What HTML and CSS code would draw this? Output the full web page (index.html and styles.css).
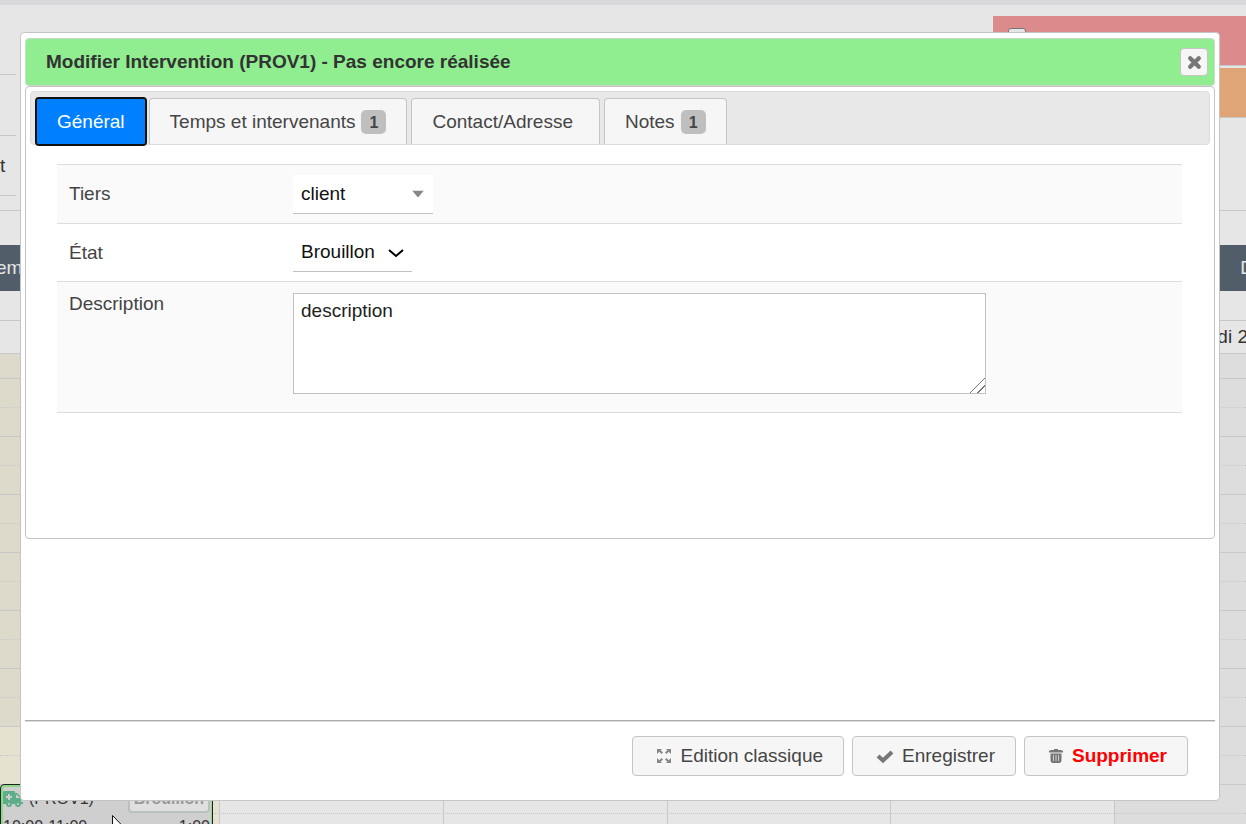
FILE: index.html
```html
<!DOCTYPE html>
<html lang="fr">
<head>
<meta charset="utf-8">
<title>Modifier Intervention</title>
<link rel="stylesheet" href="styles.css">
</head>
<body>
<main class="planner">
  <div class="topbar"></div>
  <div class="filters">
    <div class="filter-list">
      <div class="filter-row"></div>
      <div class="filter-row"></div>
      <div class="filter-row"><span>t</span></div>
    </div>
    <div class="legend">
      <div class="legend-item legend-red"><input type="checkbox" aria-label="Rouge"></div>
      <div class="legend-item legend-orange"></div>
    </div>
  </div>
  <div class="spacer"></div>
  <div class="band"><span>em</span><span>D</span></div>
  <div class="spacer-small"></div>
  <div class="day-head"><span>di 2</span></div>
  <div class="grid">
    <div class="columns">
      <div class="column today"></div><div class="column"></div><div class="column"></div><div class="column"></div><div class="column"></div><div class="column weekend"></div>
    </div>
    <div class="slots">
      <div class="slot first"></div>
      <div class="slot"></div><div class="slot half"></div>
      <div class="slot"></div><div class="slot half"></div>
      <div class="slot"></div><div class="slot half"></div>
      <div class="slot"></div><div class="slot half"></div>
      <div class="slot"></div><div class="slot half"></div>
      <div class="slot"></div><div class="slot half"></div>
      <div class="slot"></div><div class="slot half"></div>
      <div class="slot"></div><div class="slot half"></div>
    </div>
    <article class="event">
      <div class="event-line">
        <svg class="truck" viewBox="0 0 20 16" aria-hidden="true"><path fill="#5fae8a" fill-rule="evenodd" d="M1 0h10a1 1 0 0 1 1 1v1h2l4 4v5h2v2h-2a3 3 0 0 1-6 0H9a3 3 0 0 1-6 0H0V1a1 1 0 0 1 1-1zM5 3v2H3v2h2v2h2V7h2V5H7V3zm8 1v3h4l-3-3zM6 12a1 1 0 1 0 0 2 1 1 0 0 0 0-2zm9 0a1 1 0 1 0 0 2 1 1 0 0 0 0-2z"/></svg>
        <span>(PROV1)</span>
        <span class="status">Brouillon</span>
      </div>
      <div class="event-line times"><span>10:00-11:00</span><span>1:00</span></div>
      <svg class="pointer" viewBox="0 0 12 19" aria-hidden="true"><path d="M.5.5v15l3.500-3.300 2.500 5.500 2-1-2.400-5.200h5z" fill="#fff" stroke="#111"/></svg>
    </article>
  </div>
</main>

<div class="dialog" role="dialog" aria-labelledby="dialog-title">
  <header class="titlebar">
    <h1 id="dialog-title">Modifier Intervention (PROV1) - Pas encore réalisée</h1>
    <button class="close" type="button" aria-label="Fermer">
      <svg viewBox="0 0 14 14" aria-hidden="true"><path d="M3 3l8 8M11 3l-8 8" stroke="#777" stroke-width="4" stroke-linecap="round"/></svg>
    </button>
  </header>
  <section class="tabs">
    <div class="tab-list" role="tablist">
      <button class="tab active" role="tab" type="button" aria-selected="true">Général</button>
      <button class="tab" role="tab" type="button">Temps et intervenants<span class="badge">1</span></button>
      <button class="tab plain" role="tab" type="button">Contact/Adresse</button>
      <button class="tab" role="tab" type="button">Notes<span class="badge">1</span></button>
    </div>
    <form class="fields" id="fields">
      <div class="field shaded">
        <label for="tiers">Tiers</label>
        <div class="select-wrap wide">
          <select id="tiers"><option>client</option></select>
          <svg class="arrow-solid" viewBox="0 0 12 7" aria-hidden="true"><path d="M0 0h12L6 7z" fill="#888"/></svg>
        </div>
      </div>
      <div class="field">
        <label for="etat">État</label>
        <div class="select-wrap">
          <select id="etat"><option>Brouillon</option></select>
          <svg class="arrow-line" viewBox="0 0 16 10" aria-hidden="true"><path d="M1 2l7 6 7-6" fill="none" stroke="#000" stroke-width="2"/></svg>
        </div>
      </div>
      <div class="field shaded tall">
        <label for="description">Description</label>
        <textarea id="description">description</textarea>
      </div>
    </form>
  </section>
  <footer class="actions">
    <button class="action" type="button">
      <svg viewBox="0 0 16 16" aria-hidden="true"><path d="M1 1h5L4.700 2.300 7 4.600 5.600 6 3.300 3.700 1 6zM15 1h-5l1.300 1.300L9 4.600 10.400 6l2.300-2.300L15 6zM1 15h5l-1.300-1.300L7 11.400 5.600 10l-2.300 2.300L1 10zM15 15h-5l1.300-1.300L9 11.400l1.400-1.400 2.300 2.300L15 10z" fill="#888"/></svg>Edition classique
    </button>
    <button class="action" type="submit" form="fields">
      <svg class="check" viewBox="0 0 18 16" aria-hidden="true"><path d="M2 8l5 4.500L16 4" fill="none" stroke="#777" stroke-width="4"/></svg>Enregistrer
    </button>
    <button class="action danger" type="button">
      <svg viewBox="0 0 16 16" aria-hidden="true"><path fill="#777" d="M6 1h4v1h3l2 1v1.500H1V3l2-1h3z"/><path fill="#777" d="M2.500 5.500h11V13L12 15H4l-1.500-2z"/><path d="M5.500 7v6M8 7v6M10.500 7v6" stroke="#ccc" stroke-width="1"/></svg>Supprimer
    </button>
  </footer>
</div>
</body>
</html>
```
FILE: styles.css
```css
* { box-sizing: border-box; }
body {
  margin: 0;
  height: 100vh;
  overflow: hidden;
  background: #e6e6e6;
  color: #333;
  font: 19px/24px "Liberation Sans", Arial, sans-serif;
}
button, select, textarea { font: inherit; }

.topbar { height: 5px; background: #d8d8da; }
.filters { display: flex; justify-content: space-between; padding-top: 10px; height: 206px; border-bottom: 1px solid #c8c8cb; }
.filter-list { width: 16px; }
.filter-row { height: 60px; border-bottom: 1px solid #c8c8cb; }
.filter-row:nth-child(2) { height: 61px; }
.filter-row:nth-child(3) { padding-top: 18px; }
.legend { width: 253px; padding-top: 1px; }
.legend-item { height: 50px; border-bottom: 1px solid #c8c8cb; padding-left: 15px; }
.legend-red { background: #db8b8b; margin-bottom: 2px; }
.legend-orange { background: #dfa576; }
.legend input { appearance: none; width: 18px; height: 18px; margin: 12px 0 0; background: #e6e6e6; border: 1px solid #777; border-radius: 3px; }
.spacer { height: 34px; }
.band { display: flex; justify-content: space-between; align-items: center; height: 46px; background: #515e69; color: #e6e6e6; overflow: hidden; }
.band span:first-child { margin-left: -4px; }
.band span:last-child { margin-right: -8px; }
.spacer-small { height: 30px; border-bottom: 1px solid #c8c8cb; }
.day-head { display: flex; justify-content: flex-end; height: 33px; padding-top: 4px; border-bottom: 1px solid #c8c8cb; }
.day-head span { margin-right: -2px; }
.planner { height: 100vh; overflow: hidden; }

.grid { position: relative; }
.columns { position: absolute; inset: 0; display: grid; grid-template-columns: 220px repeat(4, 1fr) 131px; }
.column { border-right: 1px solid #c8c8cb; }
.today { background: linear-gradient(#dedacb 372px, #e5e2cf 372px); }
.weekend { background: #ddd; border-right: 0; }
.slots { position: relative; }
.slot { height: 29px; border-top: 1px solid #c8c8cb; }
.slot.first { height: 24px; border-top: 0; }
.slot.half { border-top-style: dotted; }
.event {
  position: absolute;
  left: 0;
  top: 430px;
  width: 213px;
  height: 60px;
  padding-left: 2px;
  background: #cfcfcf;
  border: 1px solid #222;
  border-radius: 4px;
  box-shadow: inset 2px 2px #8bd98b, inset -1px 0 #8bd98b;
  font-size: 16px;
}
.event-line { display: flex; align-items: center; gap: 6px; height: 27px; padding-right: 2px; }
.times { justify-content: space-between; height: 30px; }
.truck { width: 20px; height: 16px; }
.status { margin-left: auto; padding: 0 4px; height: 28px; border: 2px solid #b9c0c0; border-radius: 4px; background: #e0e0e0; color: #999; font-weight: bold; }
.pointer { position: absolute; left: 111px; top: 30px; width: 12px; height: 19px; }

.dialog {
  position: absolute;
  top: 32px;
  left: 20px;
  right: 26px;
  padding: 5px 4px;
  background: #fff;
  border: 1px solid #c5c5c5;
  border-radius: 4px;
}
.titlebar { display: flex; align-items: center; justify-content: space-between; height: 48px; padding: 0 6px 0 20px; background: #90ee90; border: 1px solid #ccd8cc; border-radius: 4px; }
h1 { margin: 0; font-size: 19px; line-height: 24px; }
.close { display: flex; align-items: center; justify-content: center; width: 28px; height: 28px; padding: 0; background: #f6f6f6; border: 1px solid #c5c5c5; border-radius: 4px; }
.close svg { width: 15px; height: 15px; }
.tabs { min-height: 453px; padding: 4px; border: 1px solid #c5c5c5; border-radius: 4px; }
.tab-list { display: flex; align-items: flex-end; gap: 4px; height: 54px; padding: 0 6px; background: #e8e8e8; border: 1px solid #ddd; border-radius: 4px; }
.tab { display: flex; align-items: center; gap: 6px; height: 46px; padding: 0 20px; background: #f6f6f6; border: 1px solid #c5c5c5; border-bottom: 0; border-radius: 4px 4px 0 0; color: #454545; }
.tab.plain { padding-right: 26px; }
.tab.active { height: 45px; background: #007fff; border: 0; border-radius: 2px; color: #fff; outline: 2px solid #111; }
.badge { min-width: 25px; height: 24px; border-radius: 5px; background: #bfbfbf; font-size: 16px; font-weight: bold; line-height: 26px; text-align: center; }
.fields { margin: 19px 28px 0 27px; border-bottom: 1px solid #ddd; }
.field { display: grid; grid-template-columns: 224px 1fr; align-items: center; min-height: 58px; padding: 0 12px; border-top: 1px solid #ddd; }
.field:first-child { min-height: 59px; }
.field label { color: #444; }
.shaded { background: #fafafa; }
.field.tall { align-items: start; padding: 10px 12px 18px; }
.select-wrap { position: relative; width: 119px; }
.select-wrap.wide { width: 140px; }
select { appearance: none; display: block; width: 100%; height: 39px; padding: 0 8px; background: #fff; border: 0; border-bottom: 1px solid #c0c0c0; border-radius: 0; color: #111; }
.arrow-solid, .arrow-line { position: absolute; top: 50%; transform: translateY(-50%); pointer-events: none; }
.arrow-solid { right: 9px; width: 12px; height: 7px; }
.arrow-line { right: 8px; width: 16px; height: 10px; }
textarea { display: block; width: 79%; height: 101px; margin-top: 1px; padding: 5px 7px; background: #fff; border: 1px solid #c0c0c0; color: #222; resize: both; }
textarea::-webkit-resizer { background: linear-gradient(135deg, transparent 48%, #777 48% 52%, transparent 52% 73%, #777 73% 77%, transparent 77%); }
.actions { display: flex; justify-content: flex-end; gap: 8px; margin-top: 181px; padding: 15px 27px 19px; border-top: 1px solid #aaa; box-shadow: inset 0 1px #ddd; }
.action { display: flex; align-items: center; gap: 8px; height: 40px; padding: 0 20px 0 23px; background: #f6f6f6; border: 1px solid #c5c5c5; border-radius: 4px; color: #454545; }
.action svg { width: 16px; height: 16px; }
.action .check { width: 18px; }
.danger { color: #f00; font-weight: bold; }
```
